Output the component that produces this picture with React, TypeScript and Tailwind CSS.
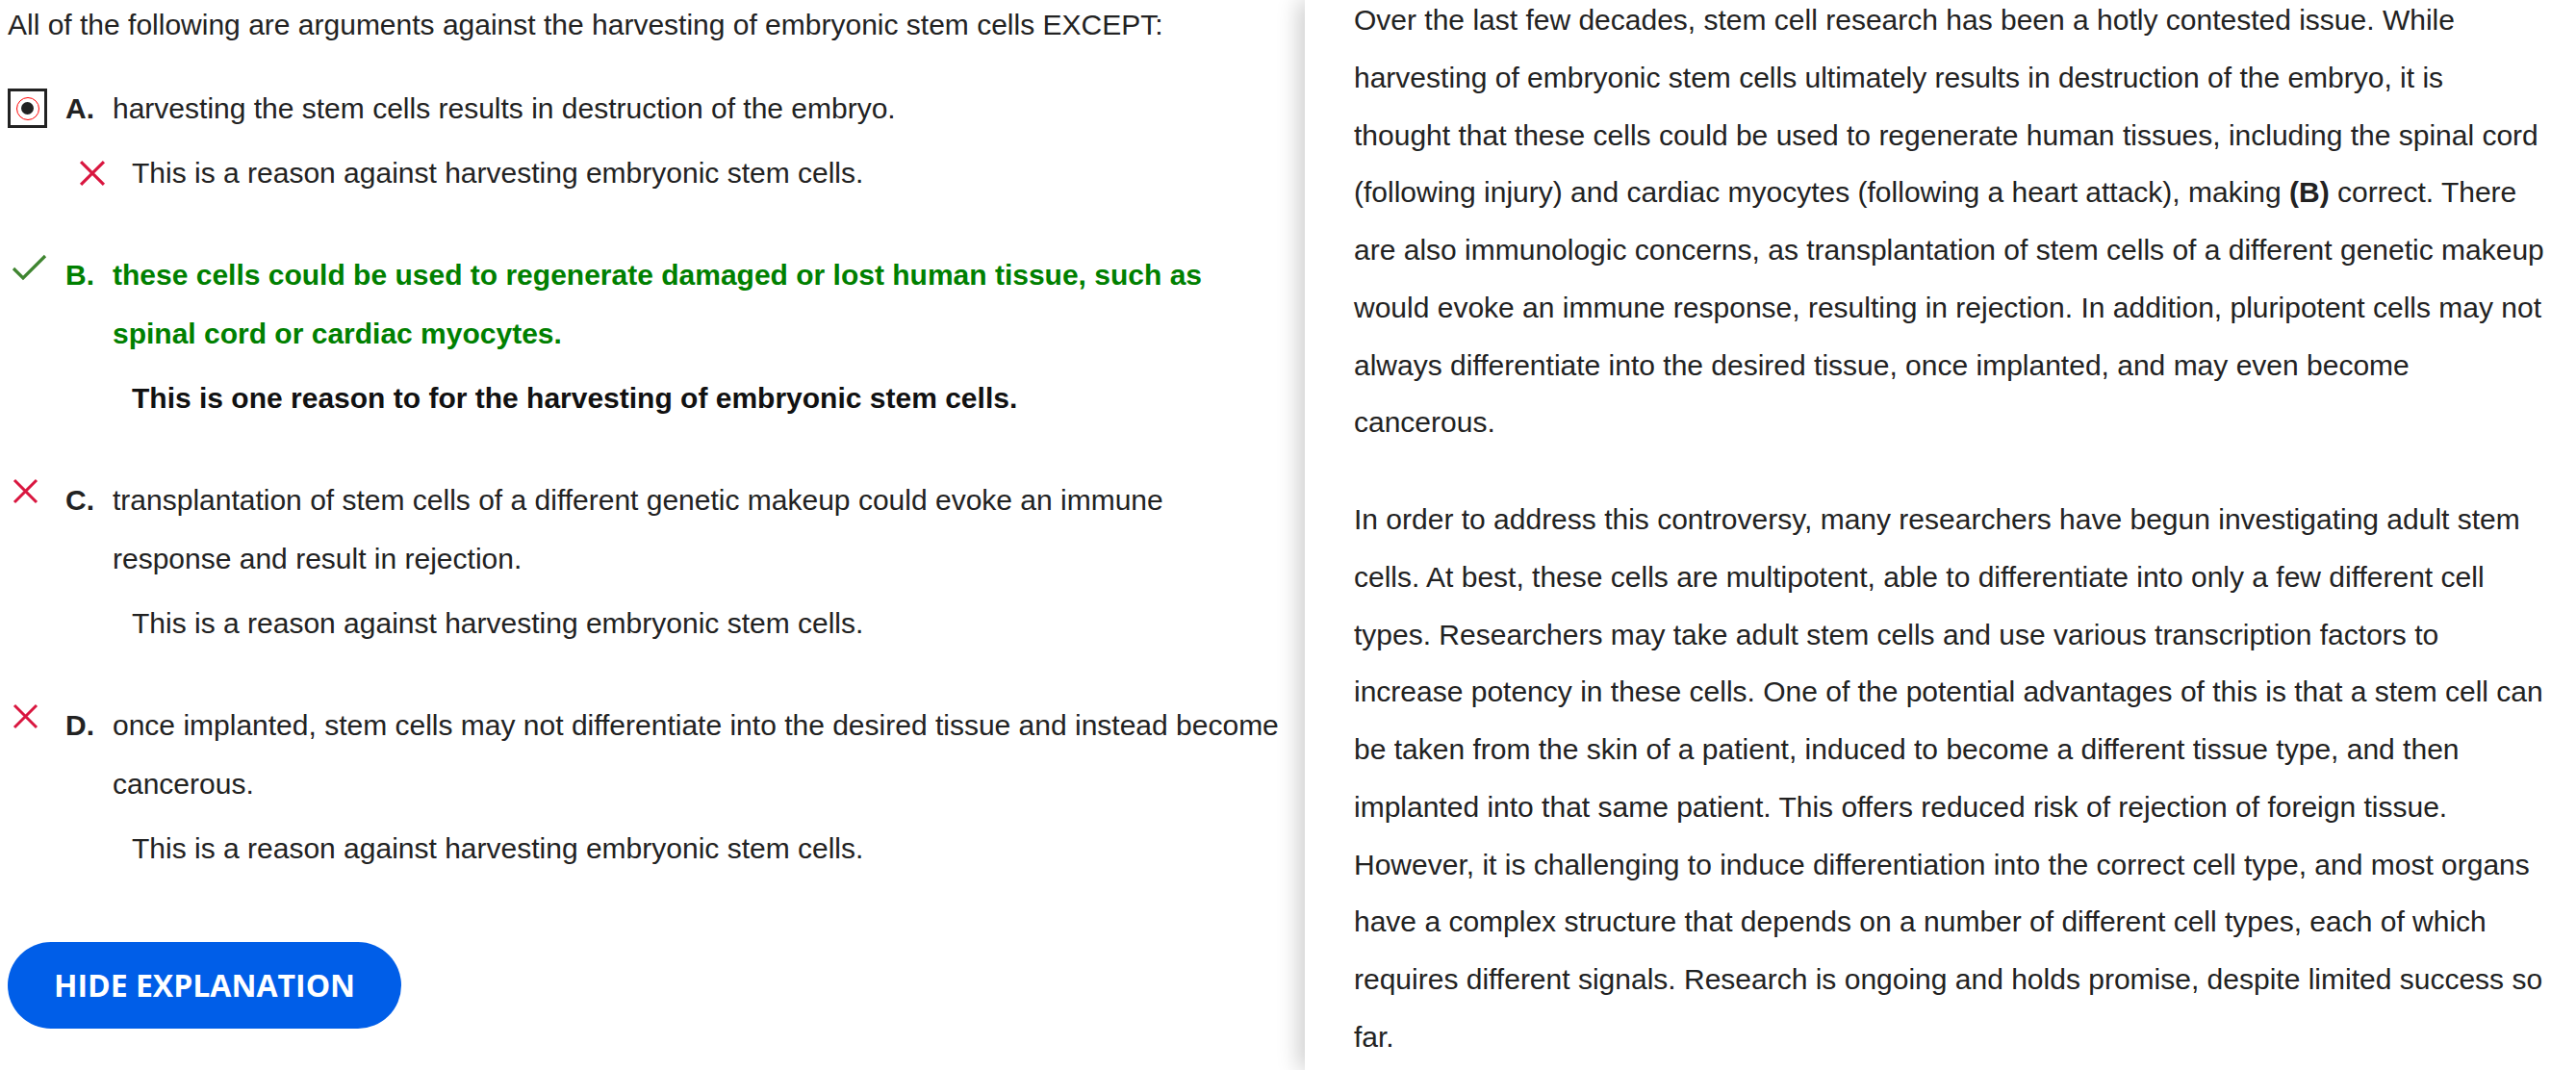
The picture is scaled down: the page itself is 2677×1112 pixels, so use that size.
type Status = 'selected' | 'correct' | 'wrong'

type Option = {
  letter: string
  text: string
  status: Status
  explanation: string
}

const options: Option[] = [
  {
    letter: 'A',
    text: 'harvesting the stem cells results in destruction of the embryo.',
    status: 'selected',
    explanation: 'This is a reason against harvesting embryonic stem cells.',
  },
  {
    letter: 'B',
    text: 'these cells could be used to regenerate damaged or lost human tissue, such as spinal cord or cardiac myocytes.',
    status: 'correct',
    explanation: 'This is one reason to for the harvesting of embryonic stem cells.',
  },
  {
    letter: 'C',
    text: 'transplantation of stem cells of a different genetic makeup could evoke an immune response and result in rejection.',
    status: 'wrong',
    explanation: 'This is a reason against harvesting embryonic stem cells.',
  },
  {
    letter: 'D',
    text: 'once implanted, stem cells may not differentiate into the desired tissue and instead become cancerous.',
    status: 'wrong',
    explanation: 'This is a reason against harvesting embryonic stem cells.',
  },
]

function CrossIcon({ size = 27 }: { size?: number }) {
  return (
    <svg width={size} height={size} viewBox="0 0 27 27" fill="none">
      <path d="M2 2L25 25M25 2L2 25" stroke="#d9163f" strokeWidth="3" />
    </svg>
  )
}

function CheckIcon() {
  return (
    <svg width="37" height="28" viewBox="0 0 37 28" fill="none">
      <path d="M2 15L12 25L35 2" stroke="#3f8530" strokeWidth="3.2" />
    </svg>
  )
}

function RadioBox() {
  return (
    <div className="flex size-[41px] items-center justify-center border-[3px] border-[#222]">
      <div className="flex size-[24px] items-center justify-center rounded-full border-[1.5px] border-[#ff0000]">
        <div className="size-[13px] rounded-full bg-[#222]" />
      </div>
    </div>
  )
}

function OptionRow({ option }: { option: Option }) {
  const correct = option.status === 'correct'
  return (
    <div>
      <div className="flex text-[30px] leading-[61px]">
        <div className="w-[60px] shrink-0">
          {option.status === 'selected' && (
            <div className="pt-[10px]">
              <RadioBox />
            </div>
          )}
          {option.status === 'correct' && (
            <div className="pl-[4px] pt-[9px]">
              <CheckIcon />
            </div>
          )}
          {option.status === 'wrong' && (
            <div className="pl-[5px] pt-[8px]">
              <CrossIcon />
            </div>
          )}
        </div>
        <span
          className={`w-[49px] shrink-0 font-bold ${correct ? 'text-[#008000]' : 'text-[#222]'}`}
        >
          {option.letter}.
        </span>
        <p className={correct ? 'font-bold text-[#008000]' : 'text-[#222]'}>{option.text}</p>
      </div>
      <div className="mt-[6px] flex items-center pl-[74px] text-[30px] leading-[61px]">
        <div className="w-[55px] shrink-0">
          {option.status === 'selected' && <CrossIcon size={28} />}
        </div>
        <p className={correct ? 'font-bold text-[#111]' : 'text-[#222]'}>{option.explanation}</p>
      </div>
    </div>
  )
}

export default function App() {
  return (
    <div className="flex h-[1112px] w-[2677px] overflow-hidden bg-white font-['Liberation_Sans',Arial,sans-serif] text-[#222]">
      <div className="w-[1356px] shrink-0 pl-[8px] pr-[24px]">
        <p className="text-[30px] leading-[52px]">
          All of the following are arguments against the harvesting of embryonic stem cells EXCEPT:
        </p>
        <div className="mt-[30px] flex flex-col gap-[45px]">
          {options.map((o) => (
            <OptionRow key={o.letter} option={o} />
          ))}
        </div>
        <button className="mt-[67px] flex h-[90px] w-[409px] items-center justify-center rounded-full bg-[#005ee8] font-['Open_Sans',sans-serif] text-[32px] font-bold text-white">
          HIDE EXPLANATION
        </button>
      </div>
      <div className="relative z-10 flex-1 bg-white pl-[51px] pr-[32px] shadow-[-6px_0_22px_rgba(0,0,0,0.2)]">
        <div className="-mt-[9px] text-[30px] leading-[59.75px] text-[#222]">
          <p>
            Over the last few decades, stem cell research has been a hotly contested issue. While
            harvesting of embryonic stem cells ultimately results in destruction of the embryo, it is
            thought that these cells could be used to regenerate human tissues, including the spinal
            cord (following injury) and cardiac myocytes (following a heart attack), making{' '}
            <b>(B)</b> correct. There are also immunologic concerns, as transplantation of stem cells
            of a different genetic makeup would evoke an immune response, resulting in rejection. In
            addition, pluripotent cells may not always differentiate into the desired tissue, once
            implanted, and may even become cancerous.
          </p>
          <p className="mt-[41px]">
            In order to address this controversy, many researchers have begun investigating adult stem
            cells. At best, these cells are multipotent, able to differentiate into only a few
            different cell types. Researchers may take adult stem cells and use various transcription
            factors to increase potency in these cells. One of the potential advantages of this is that
            a stem cell can be taken from the skin of a patient, induced to become a different tissue
            type, and then implanted into that same patient. This offers reduced risk of rejection of
            foreign tissue. However, it is challenging to induce differentiation into the correct cell
            type, and most organs have a complex structure that depends on a number of different cell
            types, each of which requires different signals. Research is ongoing and holds promise,
            despite limited success so far.
          </p>
        </div>
      </div>
    </div>
  )
}
